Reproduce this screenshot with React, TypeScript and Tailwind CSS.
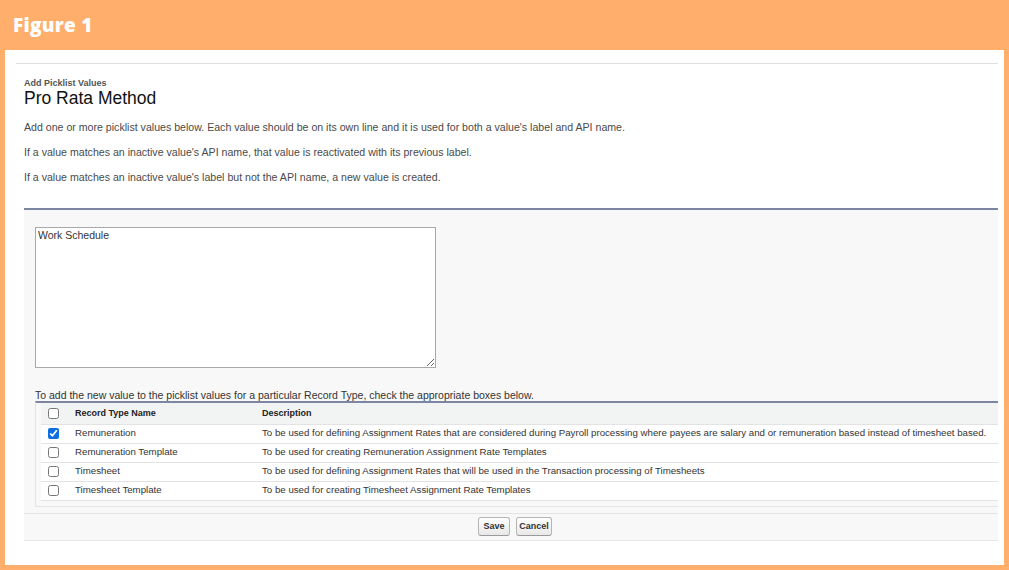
import React from 'react';

interface RecordType {
  name: string;
  description: string;
  checked: boolean;
}

const recordTypes: RecordType[] = [
  {
    name: 'Remuneration',
    description:
      'To be used for defining Assignment Rates that are considered during Payroll processing where payees are salary and or remuneration based instead of timesheet based.',
    checked: true,
  },
  {
    name: 'Remuneration Template',
    description: 'To be used for creating Remuneration Assignment Rate Templates',
    checked: false,
  },
  {
    name: 'Timesheet',
    description: 'To be used for defining Assignment Rates that will be used in the Transaction processing of Timesheets',
    checked: false,
  },
  {
    name: 'Timesheet Template',
    description: 'To be used for creating Timesheet Assignment Rate Templates',
    checked: false,
  },
];

const App: React.FC = () => {
  return (
    <div className="w-[1009px] h-[570px] bg-[#ffaf6b] flex flex-col font-['Liberation_Sans',Arial,sans-serif] overflow-hidden">
      {/* Figure banner */}
      <div className="h-[50px] flex items-center px-[13px]">
        <span className="text-white text-[19px] font-extrabold tracking-[0.3px] font-['Open_Sans','Lato',sans-serif]">
          Figure 1
        </span>
      </div>

      {/* White page */}
      <div className="flex-1 mx-[5px] mb-[5px] bg-white flex flex-col">
        <div className="mt-[13px] ml-[11px] mr-[6px] h-px bg-[#e0e0e0]" />

        <div className="pl-[19px] pr-[6px]">
          {/* Title */}
          <div className="mt-[14px] text-[9px] leading-[10px] font-bold text-[#555]">Add Picklist Values</div>
          <h1 className="text-[17.5px] leading-[20px] text-[#111]">Pro Rata Method</h1>

          {/* Instructions */}
          <div className="mt-[13px] flex flex-col gap-[12px] text-[10.6px] leading-[13px] text-[#4a4a4a]">
            <p>Add one or more picklist values below. Each value should be on its own line and it is used for both a value's label and API name.</p>
            <p>If a value matches an inactive value's API name, that value is reactivated with its previous label.</p>
            <p>If a value matches an inactive value's label but not the API name, a new value is created.</p>
          </div>

          {/* Edit block */}
          <div className="mt-[24px] border-t-2 border-[#7c86a2] bg-[#f8f8f8] border-b border-b-[#e6e6e6]">
            <div className="pl-[11px] pt-[17px]">
              <textarea
                defaultValue="Work Schedule"
                className="block w-[401px] h-[141px] bg-white border border-[#a9a9a9] px-[2px] py-[1px] text-[10.5px] leading-[13px] text-[#333] font-['Liberation_Sans',Arial,sans-serif] outline-none"
              />

              <p className="mt-[21px] text-[10.5px] leading-[12px] text-[#333]">
                To add the new value to the picklist values for a particular Record Type, check the appropriate boxes below.
              </p>

              {/* Record types table */}
              <div className="border-t-2 border-[#7c86a2] border-l border-l-[#e4e4e4] border-b border-b-[#e4e4e4] pl-[5px] pb-[5px]">
                <table className="w-full border-collapse table-fixed text-[9.7px] text-[#333]">
                  <thead>
                    <tr className="h-[21px] bg-[#f2f3f3] border-b border-[#e3e3e3]">
                      <th className="w-[34px] pl-[7px] text-left align-middle">
                        <input type="checkbox" className="block w-[11px] h-[11px] m-0" readOnly />
                      </th>
                      <th className="w-[187px] text-left font-bold text-[9px] text-[#222]">Record Type Name</th>
                      <th className="text-left font-bold text-[9px] text-[#222]">Description</th>
                    </tr>
                  </thead>
                  <tbody>
                    {recordTypes.map(rt => (
                      <tr key={rt.name} className="h-[19px] bg-white border-b border-[#e3e3e3]">
                        <td className="pl-[7px] align-middle">
                          <input
                            type="checkbox"
                            defaultChecked={rt.checked}
                            className="block w-[11px] h-[11px] m-0 accent-[#0b6fe0]"
                          />
                        </td>
                        <td className="whitespace-nowrap">{rt.name}</td>
                        <td className="whitespace-nowrap">{rt.description}</td>
                      </tr>
                    ))}
                  </tbody>
                </table>
              </div>
            </div>

            {/* Buttons */}
            <div className="mt-[6px] border-t border-[#e3e3e3] h-[27px] pl-[8px] flex items-center justify-center gap-[6px]">
              <button className="h-[19px] w-[32px] rounded-[3px] border border-[#b5b5b5] border-b-[#9a9a9a] bg-gradient-to-b from-white to-[#e8e8e8] text-[9px] font-bold text-[#333]">
                Save
              </button>
              <button className="h-[19px] w-[36px] rounded-[3px] border border-[#b5b5b5] border-b-[#9a9a9a] bg-gradient-to-b from-white to-[#e8e8e8] text-[9px] font-bold text-[#333]">
                Cancel
              </button>
            </div>
          </div>
        </div>
      </div>
    </div>
  );
};

export default App;
